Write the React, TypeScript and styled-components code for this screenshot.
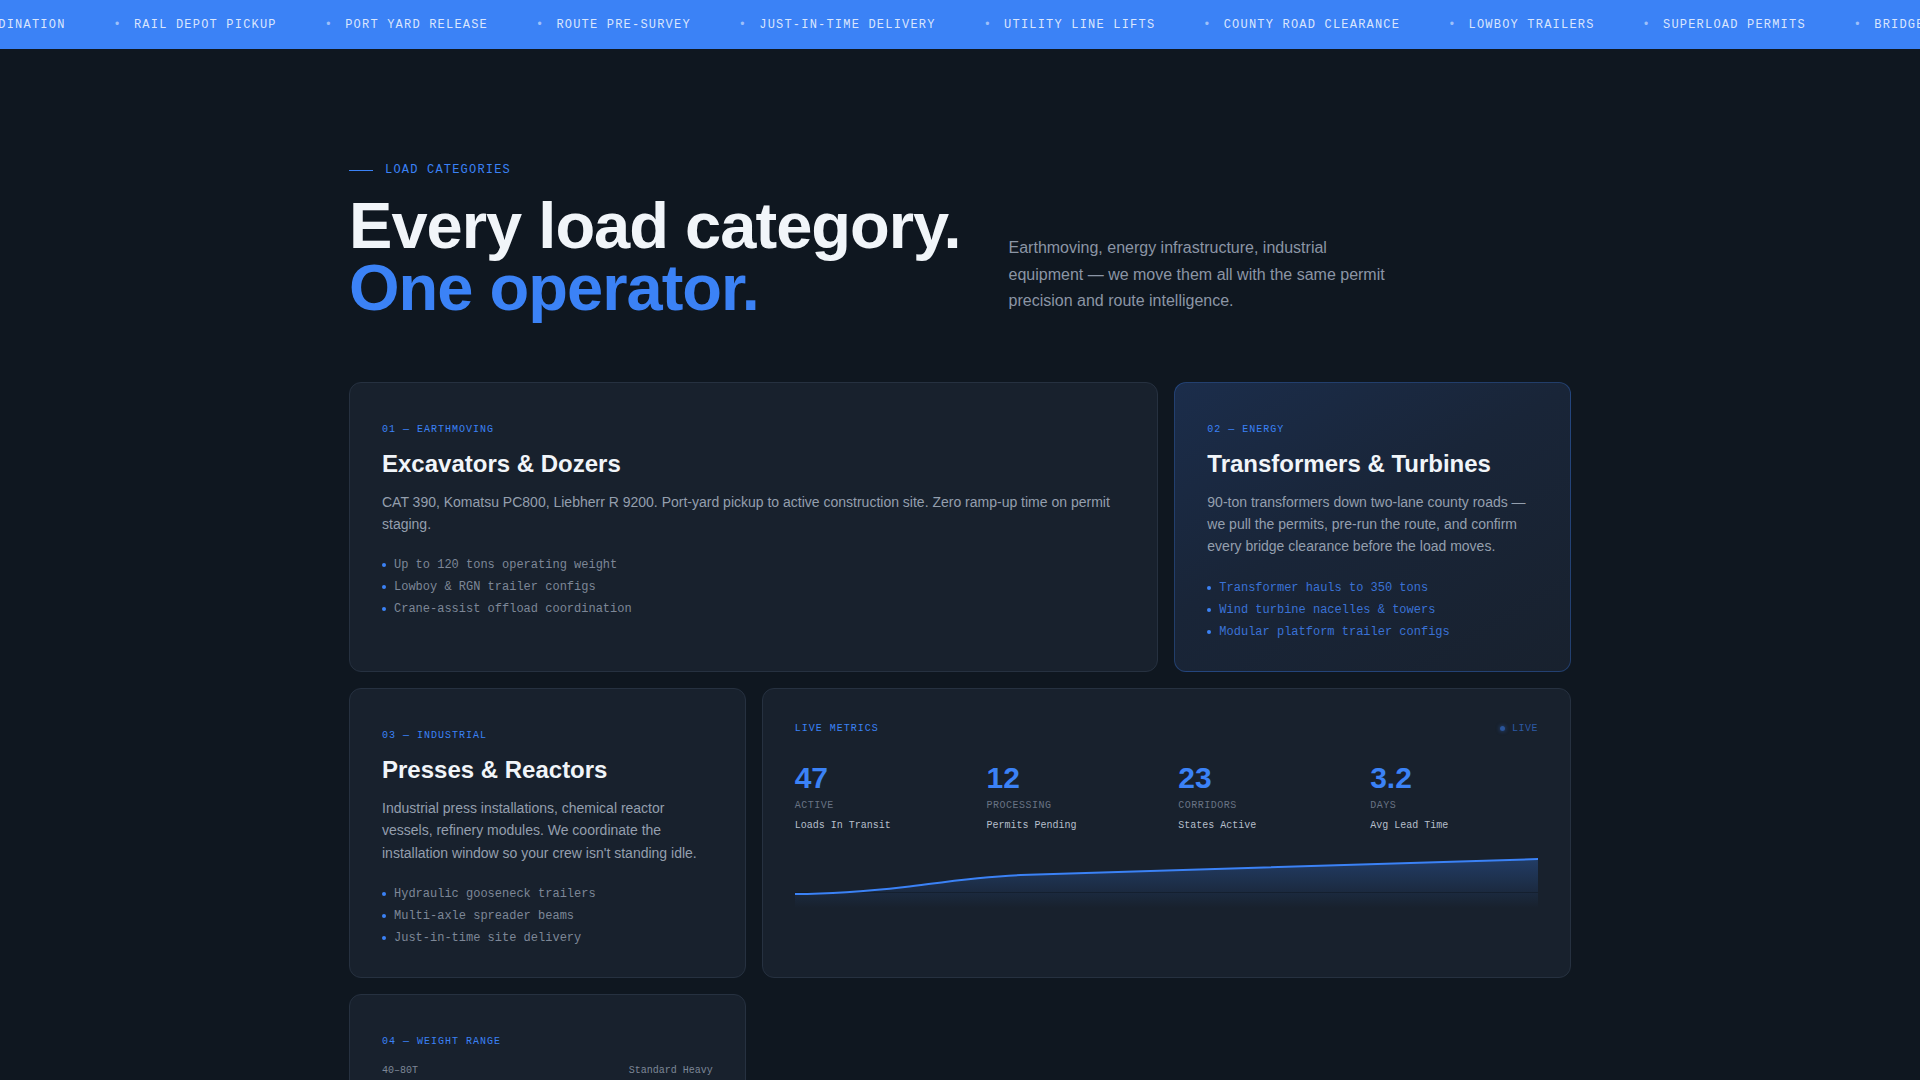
import styled, { createGlobalStyle, css } from 'styled-components';

const GlobalStyle = createGlobalStyle`
  * {
    box-sizing: border-box;
  }
  body {
    margin: 0;
    background: #0f1720;
    font-family: 'Liberation Sans', Arial, sans-serif;
    color: #f1f5f9;
  }
`;

const mono = `'Liberation Mono', 'DejaVu Sans Mono', monospace`;

const tickerItems = [
  'Escort Coordination',
  'Rail Depot Pickup',
  'Port Yard Release',
  'Route Pre-Survey',
  'Just-In-Time Delivery',
  'Utility Line Lifts',
  'County Road Clearance',
  'Lowboy Trailers',
  'Superload Permits',
  'Bridge Analysis',
  'Pilot Car Escorts',
];

const categories = [
  {
    tag: '01 — Earthmoving',
    title: 'Excavators & Dozers',
    text: 'CAT 390, Komatsu PC800, Liebherr R 9200. Port-yard pickup to active construction site. Zero ramp-up time on permit staging.',
    points: ['Up to 120 tons operating weight', 'Lowboy & RGN trailer configs', 'Crane-assist offload coordination'],
    wide: true,
  },
  {
    tag: '02 — Energy',
    title: 'Transformers & Turbines',
    text: '90-ton transformers down two-lane county roads — we pull the permits, pre-run the route, and confirm every bridge clearance before the load moves.',
    points: ['Transformer hauls to 350 tons', 'Wind turbine nacelles & towers', 'Modular platform trailer configs'],
    featured: true,
  },
  {
    tag: '03 — Industrial',
    title: 'Presses & Reactors',
    text: "Industrial press installations, chemical reactor vessels, refinery modules. We coordinate the installation window so your crew isn't standing idle.",
    points: ['Hydraulic gooseneck trailers', 'Multi-axle spreader beams', 'Just-in-time site delivery'],
  },
];

const metrics = [
  { value: '47', label: 'Active', sub: 'Loads In Transit' },
  { value: '12', label: 'Processing', sub: 'Permits Pending' },
  { value: '23', label: 'Corridors', sub: 'States Active' },
  { value: '3.2', label: 'Days', sub: 'Avg Lead Time' },
];

const weights = [
  { range: '40–80T', name: 'Standard Heavy', fill: 35 },
  { range: '80–150T', name: 'Heavy Haul', fill: 60 },
  { range: '150–350T', name: 'Superload', fill: 90 },
];

const linePath = 'M0 46 C 40 46, 70 43.5, 110 39 C 150 34, 180 29, 226 27 C 300 24.5, 480 19, 744 11';

const App = () => {
  return (
    <>
      <GlobalStyle />
      <Ticker>
        <Track>
          {tickerItems.map((item) => (
            <TickerItem key={item}>
              <TickerDot>•</TickerDot>
              {item}
            </TickerItem>
          ))}
        </Track>
      </Ticker>

      <Section>
        <Header>
          <div>
            <Eyebrow>Load Categories</Eyebrow>
            <Headline>
              Every load category.
              <br />
              <span>One operator.</span>
            </Headline>
          </div>
          <Lede>
            Earthmoving, energy infrastructure, industrial equipment — we move them all with the same permit
            precision and route intelligence.
          </Lede>
        </Header>

        <Grid>
          {categories.slice(0, 2).map((c) => (
            <Card key={c.tag} $wide={c.wide} $featured={c.featured}>
              <Tag>{c.tag}</Tag>
              <CardTitle>{c.title}</CardTitle>
              <CardText>{c.text}</CardText>
              <Points $featured={c.featured}>
                {c.points.map((p) => (
                  <li key={p}>{p}</li>
                ))}
              </Points>
            </Card>
          ))}

          <Card>
            <Tag>{categories[2].tag}</Tag>
            <CardTitle>{categories[2].title}</CardTitle>
            <CardText>{categories[2].text}</CardText>
            <Points>
              {categories[2].points.map((p) => (
                <li key={p}>{p}</li>
              ))}
            </Points>
          </Card>

          <MetricsCard $wide>
            <MetricsHead>
              <Tag as="span">Live Metrics</Tag>
              <Live>Live</Live>
            </MetricsHead>
            <Stats>
              {metrics.map((m) => (
                <Stat key={m.label}>
                  <StatValue>{m.value}</StatValue>
                  <StatLabel>{m.label}</StatLabel>
                  <StatSub>{m.sub}</StatSub>
                </Stat>
              ))}
            </Stats>
            <Chart viewBox="0 0 744 60" preserveAspectRatio="none">
              <defs>
                <linearGradient id="area" x1="0" y1="0" x2="0" y2="1">
                  <stop offset="0%" stopColor="#3b82f6" stopOpacity="0.28" />
                  <stop offset="100%" stopColor="#3b82f6" stopOpacity="0" />
                </linearGradient>
              </defs>
              <path d={`${linePath} L744 60 L0 60 Z`} fill="url(#area)" />
              <line x1="0" y1="44.5" x2="744" y2="44.5" stroke="#0f1720" strokeOpacity="0.5" strokeWidth="1" />
              <path d={linePath} fill="none" stroke="#3b82f6" strokeWidth="2" />
            </Chart>
          </MetricsCard>

          <Card>
            <Tag>04 — Weight Range</Tag>
            <Ranges>
              {weights.map((w) => (
                <Range key={w.range}>
                  <RangeRow>
                    <span>{w.range}</span>
                    <span>{w.name}</span>
                  </RangeRow>
                  <Bar>
                    <BarFill style={{ width: `${w.fill}%` }} />
                  </Bar>
                </Range>
              ))}
            </Ranges>
          </Card>
        </Grid>
      </Section>
    </>
  );
};
export default App;

const Ticker = styled.div`
  height: 49px;
  background: #3b82f6;
  overflow: hidden;
  display: flex;
  align-items: center;
`;

const Track = styled.div`
  display: flex;
  gap: 48px;
  white-space: nowrap;
  transform: translateX(-114.5px);
`;

const TickerItem = styled.div`
  display: flex;
  align-items: center;
  gap: 12px;
  font-family: ${mono};
  font-size: 12px;
  letter-spacing: 0.1em;
  text-transform: uppercase;
  color: rgba(255, 255, 255, 0.82);
`;

const TickerDot = styled.span`
  color: rgba(255, 255, 255, 0.5);
`;

const Section = styled.section`
  max-width: 1222px;
  margin: 0 auto;
  padding: 112px 0 80px;
`;

const Header = styled.div`
  display: flex;
  align-items: flex-end;
  gap: 48px;
  margin-bottom: 63px;
`;

const Eyebrow = styled.div`
  display: flex;
  align-items: center;
  gap: 12px;
  margin-bottom: 16px;
  font-family: ${mono};
  font-size: 12px;
  line-height: 18px;
  letter-spacing: 0.1em;
  text-transform: uppercase;
  color: #3b82f6;
  &::before {
    content: '';
    width: 24px;
    height: 1px;
    background: #3b82f6;
  }
`;

const Headline = styled.h1`
  margin: 0;
  font-size: 65px;
  line-height: 0.95;
  font-weight: 700;
  letter-spacing: -0.015em;
  color: #f1f5f9;
  span {
    color: #3b82f6;
  }
`;

const Lede = styled.p`
  max-width: 386px;
  margin: 0 0 4px;
  font-size: 16px;
  line-height: 1.65;
  color: #8b95a5;
`;

const Grid = styled.div`
  display: grid;
  grid-template-columns: repeat(3, 1fr);
  gap: 16px;
`;

const Card = styled.div<{ $wide?: boolean; $featured?: boolean }>`
  grid-column: span ${(p) => (p.$wide ? 2 : 1)};
  padding: 39px 32px 28px;
  background: #18212d;
  border: 1px solid #263140;
  border-radius: 12px;
  ${(p) =>
    p.$featured &&
    css`
      background: linear-gradient(150deg, #1b2d4b 0%, #192538 45%, #18212e 100%);
      border-color: rgba(59, 130, 246, 0.3);
    `}
`;

const Tag = styled.div`
  display: block;
  margin-bottom: 11px;
  font-family: ${mono};
  font-size: 10px;
  line-height: 15px;
  letter-spacing: 0.1em;
  text-transform: uppercase;
  color: #3b82f6;
`;

const CardTitle = styled.h3`
  margin: 0 0 12px;
  font-size: 24px;
  line-height: 1.3;
  font-weight: 700;
  color: #f1f5f9;
`;

const CardText = styled.p`
  margin: 0 0 19px;
  font-size: 14px;
  line-height: 1.6;
  color: #949fae;
`;

const Points = styled.ul<{ $featured?: boolean }>`
  margin: 0;
  padding: 0;
  list-style: none;
  li {
    display: flex;
    align-items: center;
    gap: 8px;
    font-family: ${mono};
    font-size: 12px;
    line-height: 22px;
    color: ${(p) => (p.$featured ? '#3a72d6' : '#7d8797')};
    &::before {
      content: '';
      width: 4px;
      height: 4px;
      border-radius: 50%;
      background: #3b82f6;
    }
  }
`;

const MetricsCard = styled(Card)`
  padding: 32px 32px 31px;
`;

const MetricsHead = styled.div`
  display: flex;
  justify-content: space-between;
  align-items: center;
  margin-bottom: 25px;
  ${Tag} {
    margin: 0;
  }
`;

const Live = styled.span`
  display: flex;
  align-items: center;
  gap: 7px;
  font-family: ${mono};
  font-size: 10px;
  line-height: 15px;
  letter-spacing: 0.05em;
  text-transform: uppercase;
  color: rgba(59, 130, 246, 0.6);
  &::before {
    content: '';
    width: 5px;
    height: 5px;
    border-radius: 50%;
    background: rgba(59, 130, 246, 0.55);
    box-shadow: 0 0 4px rgba(59, 130, 246, 0.5);
  }
`;

const Stats = styled.div`
  display: grid;
  grid-template-columns: repeat(4, 1fr);
  gap: 24px;
  margin-bottom: 15px;
`;

const Stat = styled.div`
  display: flex;
  flex-direction: column;
`;

const StatValue = styled.div`
  font-size: 30px;
  line-height: 33px;
  font-weight: 700;
  color: #3b82f6;
`;

const StatLabel = styled.div`
  margin-top: 4px;
  font-family: ${mono};
  font-size: 10px;
  line-height: 15px;
  letter-spacing: 0.05em;
  text-transform: uppercase;
  color: #687384;
`;

const StatSub = styled.div`
  margin-top: 5px;
  font-family: ${mono};
  font-size: 10px;
  line-height: 15px;
  color: #b6bfcb;
`;

const Chart = styled.svg`
  display: block;
  width: 100%;
  height: 60px;
`;

const Ranges = styled.div`
  display: flex;
  flex-direction: column;
  gap: 16px;
  padding-top: 3px;
`;

const Range = styled.div`
  display: flex;
  flex-direction: column;
  gap: 8px;
`;

const RangeRow = styled.div`
  display: flex;
  justify-content: space-between;
  font-family: ${mono};
  font-size: 10px;
  line-height: 15px;
  color: #7d8797;
`;

const Bar = styled.div`
  height: 4px;
  border-radius: 2px;
  background: #243041;
  overflow: hidden;
`;

const BarFill = styled.div`
  height: 100%;
  background: #3b82f6;
`;
